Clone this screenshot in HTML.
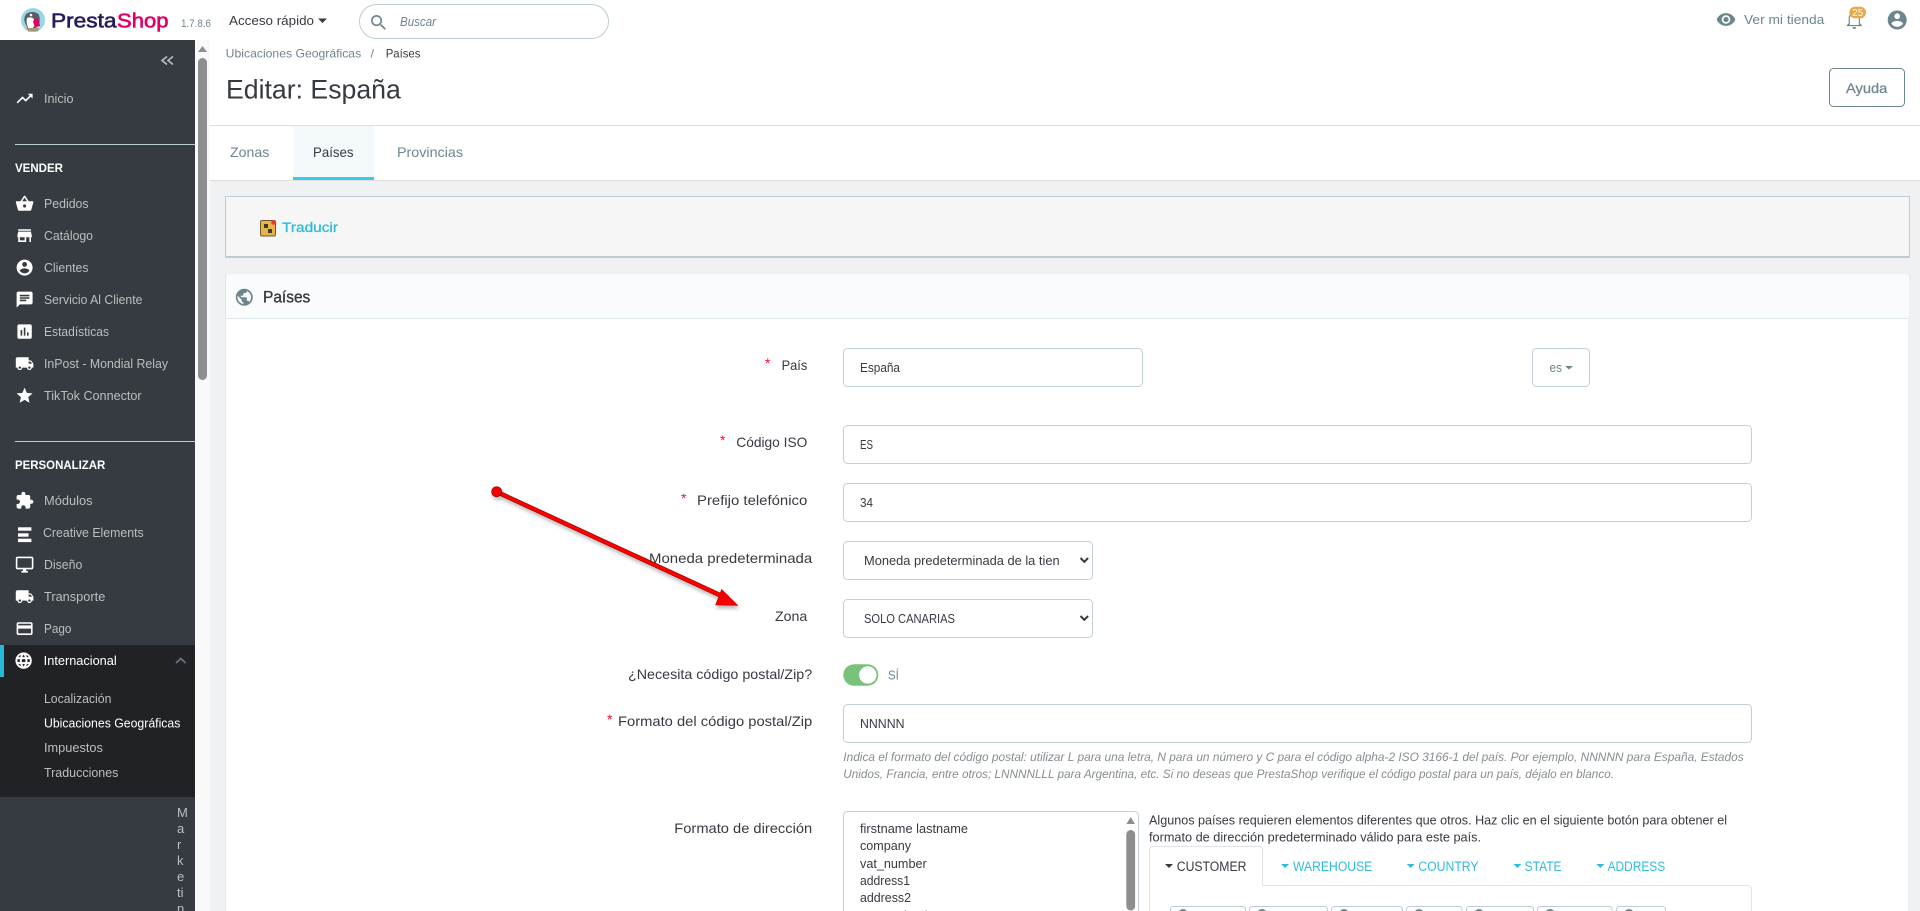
<!DOCTYPE html>
<html lang="es">
<head>
<meta charset="utf-8">
<title>Editar: España</title>
<style>
html,body{margin:0;padding:0;width:1920px;height:911px;overflow:hidden;background:#fff}
svg{display:block}
text{font-family:"Liberation Sans",sans-serif;white-space:pre}
.s{font-size:12.5px;fill:#bebebe}
.h{font-size:12px;font-weight:bold;fill:#fff}
.l{font-size:14px;fill:#363a41}
.i{font-size:12.5px;fill:#363a41}
.e{font-size:11.5px;font-style:italic;fill:#858d91}
.t{font-size:14px}
.c{font-size:13.5px;fill:#2fbcd9}
.b{fill:none;stroke:#c2d0d5}
.r{font-size:14px;fill:#ff0a2b}
</style>
</head>
<body>
<svg xmlns="http://www.w3.org/2000/svg" width="1920" height="911" viewBox="0 0 1920 911">
<defs>
<filter id="sh" x="-10%" y="-20%" width="120%" height="140%"><feDropShadow dx="1" dy="3" stdDeviation="1.8" flood-color="#666" flood-opacity=".45"/></filter>
<path id="truck" d="M20 8h-3V4H3c-1.100 0-2 .9-2 2v11h2c0 1.660 1.340 3 3 3s3-1.340 3-3h6c0 1.660 1.340 3 3 3s3-1.340 3-3h2v-5l-3-4zM6 18.500c-.83 0-1.500-.67-1.500-1.500s.67-1.500 1.500-1.500 1.500.67 1.500 1.500-.67 1.500-1.500 1.500zm13.500-9l1.960 2.500H17V9.500h2.500zm-1.500 9c-.83 0-1.500-.67-1.500-1.500s.67-1.500 1.500-1.500 1.500.67 1.500 1.500-.67 1.500-1.500 1.500z"/>
</defs>

<!-- page background -->
<rect width="1920" height="911" fill="#fff"/>
<rect x="210" y="181" width="1710" height="730" fill="#eff1f2"/>

<!-- top bar: logo -->
<circle cx="33" cy="20" r="12" fill="#9ad7e6"/>
<path d="M25.500 15c2-3.500 10.500-4.500 13.500 0 1 3 1 6 0 9l-4 5h-7l-3-6c-1-3-1-5 .5-8z" fill="#5a5f65"/>
<path d="M27 18c2-1 5-1 7 1l1 6-3 4h-3c-2-3-3-7-2-11z" fill="#fff"/>
<path d="M35 17l4 4 1 5-5 1-2-5z" fill="#df0067"/>
<path d="M26 28h13l-1 3.500H28z" fill="#a8977f"/>
<circle cx="31" cy="15" r="1.300" fill="#fff"/>
<text x="51" y="27.500" font-size="20.500" fill="#251b5b" stroke="#251b5b" stroke-width=".6" textLength="65.500" lengthAdjust="spacingAndGlyphs">Presta</text>
<text x="117" y="27.500" font-size="20.500" fill="#df0067" stroke="#df0067" stroke-width=".6" textLength="51.500" lengthAdjust="spacingAndGlyphs">Shop</text>
<text x="181" y="27" font-size="11" fill="#6c868e" textLength="30" lengthAdjust="spacingAndGlyphs">1.7.8.6</text>
<text x="229" y="25" font-size="13" fill="#363a41" textLength="85" lengthAdjust="spacingAndGlyphs">Acceso rápido</text>
<path d="M318 18.500h9l-4.500 4.500z" fill="#363a41"/>

<!-- search -->
<rect x="359.500" y="4.500" width="249" height="34" rx="17" fill="#fff" stroke="#bbcdd2"/>
<path transform="translate(368.500 12.500) scale(.85)" fill="#6c868e" d="M15.500 14h-.79l-.28-.27C15.410 12.590 16 11.110 16 9.500 16 5.910 13.090 3 9.500 3S3 5.910 3 9.500 5.910 16 9.500 16c1.610 0 3.090-.59 4.230-1.570l.27.28v.79l5 4.990L20.490 19l-4.990-5zm-6 0C7.010 14 5 11.990 5 9.500S7.010 5 9.500 5 14 7.010 14 9.500 11.990 14 9.500 14z"/>
<text x="400" y="26" font-size="12.500" font-style="italic" fill="#6c868e" textLength="36" lengthAdjust="spacingAndGlyphs">Buscar</text>

<!-- top bar: right -->
<path transform="translate(1715.800 9.300) scale(.85)" fill="#6c868e" d="M12 4.500C7 4.500 2.730 7.610 1 12c1.730 4.390 6 7.500 11 7.500s9.270-3.110 11-7.500c-1.730-4.390-6-7.500-11-7.500zM12 17c-2.760 0-5-2.240-5-5s2.240-5 5-5 5 2.240 5 5-2.240 5-5 5zm0-8c-1.660 0-3 1.340-3 3s1.340 3 3 3 3-1.340 3-3-1.340-3-3-3z"/>
<text x="1744" y="24" font-size="13" fill="#6c868e" textLength="80.300" lengthAdjust="spacingAndGlyphs">Ver mi tienda</text>
<path transform="translate(1843 8.300) scale(.94)" fill="#6c868e" d="M12 22c1.100 0 2-.9 2-2h-4c0 1.100.9 2 2 2zm6-6v-5c0-3.070-1.630-5.640-4.500-6.320V4c0-.83-.67-1.500-1.500-1.500s-1.500.67-1.500 1.500v.68C7.640 5.360 6 7.920 6 11v5l-2 2v1h16v-1l-2-2zm-1.200 1.800H7.200V11c0-2.480 2.310-4.800 4.800-4.800s4.800 2.320 4.800 4.800v6.800z"/>
<rect x="1849.300" y="6.700" width="16.700" height="11.600" rx="5.800" fill="#e8a94c"/>
<text x="1852.300" y="16" font-size="10" fill="#fff" textLength="10.800" lengthAdjust="spacingAndGlyphs">25</text>
<path transform="translate(1885.800 8.600) scale(.95)" fill="#6c868e" d="M12 2C6.480 2 2 6.480 2 12s4.480 10 10 10 10-4.480 10-10S17.520 2 12 2zm0 3c1.660 0 3 1.340 3 3s-1.340 3-3 3-3-1.340-3-3 1.340-3 3-3zm0 14.200c-2.500 0-4.710-1.280-6-3.220.03-1.990 4-3.080 6-3.080 1.990 0 5.970 1.090 6 3.080-1.290 1.940-3.500 3.220-6 3.220z"/>

<!-- sidebar -->
<rect x="0" y="40" width="195" height="871" fill="#363a41"/>
<rect x="195" y="40" width="15" height="871" fill="#f9f9f9"/>
<path d="M202.500 46l4.500 6h-9z" fill="#8e8e8e"/>
<rect x="198" y="58" width="9" height="322" rx="4.500" fill="#8e8e8e"/>
<path d="M167 56.500l-5 4 5 4M173 56.500l-5 4 5 4" fill="none" stroke="#bebebe" stroke-width="1.600"/>

<g fill="#fff">
<path transform="translate(15 89) scale(.8)" d="M16 6l2.290 2.290-4.880 4.880-4-4L2 16.590 3.410 18l6-6 4 4 6.300-6.290L22 12V6z"/>
<path transform="translate(15 194) scale(.8)" d="M17.210 9l-4.380-6.560c-.19-.28-.51-.42-.83-.42-.32 0-.64.14-.83.43L6.790 9H2c-.55 0-1 .45-1 1 0 .09.01.18.04.27l2.540 9.270c.23.84 1 1.460 1.920 1.460h13c.92 0 1.690-.62 1.930-1.460l2.540-9.270L23 10c0-.55-.45-1-1-1h-4.790zM9 9l3-4.400L15 9H9zm3 8c-1.100 0-2-.9-2-2s.9-2 2-2 2 .9 2 2-.9 2-2 2z"/>
<path transform="translate(15 226) scale(.8)" d="M20 4H4v2h16V4zm1 10v-2l-1-5H4l-1 5v2h1v6h10v-6h4v6h2v-6h1zm-9 4H6v-4h6v4z"/>
<path transform="translate(15 258) scale(.8)" d="M12 2C6.480 2 2 6.480 2 12s4.480 10 10 10 10-4.480 10-10S17.520 2 12 2zm0 3c1.660 0 3 1.340 3 3s-1.340 3-3 3-3-1.340-3-3 1.340-3 3-3zm0 14.200c-2.500 0-4.710-1.280-6-3.220.03-1.990 4-3.080 6-3.080 1.990 0 5.970 1.090 6 3.080-1.290 1.940-3.500 3.220-6 3.220z"/>
<path transform="translate(15 290) scale(.8)" d="M20 2H4c-1.100 0-1.990.9-1.990 2L2 22l4-4h14c1.100 0 2-.9 2-2V4c0-1.100-.9-2-2-2zM6 9h12v2H6V9zm8 5H6v-2h8v2zm4-6H6V6h12v2z"/>
<path transform="translate(15 322) scale(.8)" d="M19 3H5c-1.100 0-2 .9-2 2v14c0 1.100.9 2 2 2h14c1.100 0 2-.9 2-2V5c0-1.100-.9-2-2-2zM9 17H7v-7h2v7zm4 0h-2V7h2v10zm4 0h-2v-4h2v4z"/>
<use href="#truck" transform="translate(15 354) scale(.8)"/>
<path transform="translate(15 386) scale(.8)" d="M12 17.270L18.180 21l-1.640-7.030L22 9.240l-7.190-.61L12 2 9.190 8.630 2 9.240l5.460 4.730L5.820 21z"/>
<path transform="translate(15 491) scale(.8)" d="M20.500 11H19V7c0-1.100-.9-2-2-2h-4V3.500C13 2.120 11.880 1 10.500 1S8 2.120 8 3.500V5H4c-1.100 0-1.990.9-1.990 2v3.800H3.500c1.490 0 2.700 1.210 2.700 2.700s-1.210 2.700-2.700 2.700H2V20c0 1.100.9 2 2 2h3.800v-1.500c0-1.490 1.210-2.700 2.700-2.700 1.490 0 2.700 1.210 2.700 2.700V22H17c1.100 0 2-.9 2-2v-4h1.500c1.380 0 2.500-1.120 2.500-2.500S21.880 11 20.500 11z"/>
<rect x="18" y="527.300" width="13.400" height="3.400"/><rect x="18" y="533.300" width="10.600" height="3.400"/><rect x="18" y="538.700" width="13.400" height="3.400"/>
<path transform="translate(15 555) scale(.8)" d="M21 2H3c-1.100 0-2 .9-2 2v12c0 1.100.9 2 2 2h7v2H8v2h8v-2h-2v-2h7c1.100 0 2-.9 2-2V4c0-1.100-.9-2-2-2zm0 14H3V4h18v12z"/>
<use href="#truck" transform="translate(15 587) scale(.8)"/>
<path transform="translate(15 619) scale(.8)" d="M20 4H4c-1.110 0-1.990.89-1.990 2L2 18c0 1.110.89 2 2 2h16c1.110 0 2-.89 2-2V6c0-1.110-.89-2-2-2zm0 14H4v-6h16v6zm0-10H4V6h16v2z"/>
</g>

<text class="s" x="44" y="103" textLength="29.500" lengthAdjust="spacingAndGlyphs">Inicio</text>
<rect x="15" y="144" width="180" height="1" fill="#bbcdd2"/>
<text class="h" x="15" y="172" textLength="48" lengthAdjust="spacingAndGlyphs">VENDER</text>
<text class="s" x="44" y="208" textLength="44.600" lengthAdjust="spacingAndGlyphs">Pedidos</text>
<text class="s" x="44" y="240" textLength="49" lengthAdjust="spacingAndGlyphs">Catálogo</text>
<text class="s" x="44" y="272" textLength="44.600" lengthAdjust="spacingAndGlyphs">Clientes</text>
<text class="s" x="44" y="304" textLength="98.400" lengthAdjust="spacingAndGlyphs">Servicio Al Cliente</text>
<text class="s" x="44" y="336" textLength="65" lengthAdjust="spacingAndGlyphs">Estadísticas</text>
<text class="s" x="44" y="368" textLength="124" lengthAdjust="spacingAndGlyphs">InPost - Mondial Relay</text>
<text class="s" x="44" y="400" textLength="97.600" lengthAdjust="spacingAndGlyphs">TikTok Connector</text>
<rect x="15" y="441" width="180" height="1" fill="#bbcdd2"/>
<text class="h" x="15" y="469" textLength="90.300" lengthAdjust="spacingAndGlyphs">PERSONALIZAR</text>
<text class="s" x="44" y="505" textLength="48.600" lengthAdjust="spacingAndGlyphs">Módulos</text>
<text class="s" x="43" y="537" textLength="100.700" lengthAdjust="spacingAndGlyphs">Creative Elements</text>
<text class="s" x="44" y="569" textLength="38.400" lengthAdjust="spacingAndGlyphs">Diseño</text>
<text class="s" x="44" y="601" textLength="61.300" lengthAdjust="spacingAndGlyphs">Transporte</text>
<text class="s" x="44" y="633" textLength="27.400" lengthAdjust="spacingAndGlyphs">Pago</text>

<rect x="0" y="645" width="195" height="152" fill="#202226"/>
<rect x="0" y="645" width="4" height="32" fill="#25b9d7"/>
<path transform="translate(14 651) scale(.8)" fill="#fff" stroke="#fff" stroke-width=".5" d="M11.990 2C6.470 2 2 6.480 2 12s4.470 10 9.990 10C17.520 22 22 17.520 22 12S17.520 2 11.990 2zm6.930 6h-2.950c-.32-1.250-.78-2.450-1.380-3.560 1.840.63 3.370 1.910 4.330 3.560zM12 4.040c.83 1.200 1.480 2.530 1.910 3.960h-3.820c.43-1.430 1.080-2.760 1.910-3.960zM4.260 14C4.100 13.360 4 12.690 4 12s.1-1.360.26-2h3.380c-.08.66-.14 1.320-.14 2 0 .68.06 1.340.14 2H4.260zm.82 2h2.950c.32 1.250.78 2.450 1.380 3.560-1.840-.63-3.370-1.900-4.330-3.560zm2.950-8H5.080c.96-1.660 2.490-2.930 4.330-3.560C8.810 5.550 8.350 6.750 8.030 8zM12 19.960c-.83-1.200-1.480-2.530-1.910-3.960h3.820c-.43 1.430-1.080 2.760-1.910 3.960zM14.340 14H9.660c-.09-.66-.16-1.320-.16-2 0-.68.07-1.350.16-2h4.680c.09.65.16 1.320.16 2 0 .68-.07 1.340-.16 2zm.25 5.560c.6-1.110 1.060-2.310 1.380-3.560h2.950c-.96 1.650-2.490 2.930-4.330 3.560zM16.360 14c.08-.66.14-1.320.14-2 0-.68-.06-1.340-.14-2h3.380c.16.64.26 1.310.26 2s-.1 1.360-.26 2h-3.380z"/>
<text x="43.700" y="665" font-size="12.500" fill="#fff" textLength="73" lengthAdjust="spacingAndGlyphs">Internacional</text>
<path d="M176 663l4.800-4.500 4.800 4.500" fill="none" stroke="#6c7378" stroke-width="1.800"/>
<text class="s" x="44" y="703" textLength="67.400" lengthAdjust="spacingAndGlyphs">Localización</text>
<text x="44" y="727.500" font-size="12.500" fill="#fff" textLength="136.400" lengthAdjust="spacingAndGlyphs">Ubicaciones Geográficas</text>
<text class="s" x="44" y="752" textLength="58.900" lengthAdjust="spacingAndGlyphs">Impuestos</text>
<text class="s" x="44" y="777" textLength="74.400" lengthAdjust="spacingAndGlyphs">Traducciones</text>
<g font-size="13" fill="#bebebe">
<text x="177" y="817">M</text><text x="177" y="833">a</text><text x="177" y="849">r</text><text x="177" y="865">k</text><text x="177" y="881">e</text><text x="177" y="897">ti</text><text x="177" y="913">n</text>
</g>

<!-- page head -->
<text x="225.700" y="57.500" font-size="12" fill="#6c868e" textLength="135.500" lengthAdjust="spacingAndGlyphs">Ubicaciones Geográficas</text>
<text x="370.600" y="57.500" font-size="12" fill="#6c868e">/</text>
<text x="385.700" y="57.500" font-size="12" fill="#363a41" textLength="34.700" lengthAdjust="spacingAndGlyphs">Países</text>
<text x="226" y="98.500" font-size="27" fill="#363a41" textLength="174.800" lengthAdjust="spacingAndGlyphs">Editar: España</text>
<rect x="1829.500" y="68.500" width="75" height="38" rx="4" fill="#fff" stroke="#6c868e"/>
<text x="1846" y="93" font-size="14" fill="#6c868e" stroke="#6c868e" stroke-width=".25" textLength="41.300" lengthAdjust="spacingAndGlyphs">Ayuda</text>
<rect x="210" y="125" width="1710" height="1" fill="#dfdfdf"/>

<!-- tabs -->
<rect x="293" y="126" width="81" height="54" fill="#f4f9fb"/>
<rect x="293" y="177" width="81" height="3" fill="#39cbe6"/>
<rect x="210" y="180" width="1710" height="1" fill="#dfdfdf"/>
<text class="t" x="230" y="157" fill="#6c868e" textLength="39.400" lengthAdjust="spacingAndGlyphs">Zonas</text>
<text class="t" x="313" y="157" fill="#363a41" textLength="40.500" lengthAdjust="spacingAndGlyphs">Países</text>
<text class="t" x="397" y="157" fill="#6c868e" textLength="66" lengthAdjust="spacingAndGlyphs">Provincias</text>

<!-- translate box -->
<rect x="225.500" y="196.500" width="1684" height="60" fill="#f6f6f6" stroke="#bbcdd2"/>
<rect x="225" y="256" width="1685" height="2" fill="#bbcdd2"/>
<rect x="260.500" y="220.500" width="15" height="15.500" rx="1.500" fill="#e8b44a" stroke="#6b5a30"/>
<rect x="264" y="224" width="4" height="4" fill="#3d3a2c"/><rect x="268" y="229" width="4" height="4" fill="#3d3a2c"/>
<circle cx="273.500" cy="222.500" r="2.300" fill="#f0392a"/>
<text x="282" y="232" font-size="14" fill="#2fbcd9" stroke="#2fbcd9" stroke-width=".3" textLength="56" lengthAdjust="spacingAndGlyphs">Traducir</text>

<!-- card -->
<rect x="225.500" y="273.500" width="1683.500" height="650" rx="3" fill="#fff" stroke="#e1e6e8"/>
<path d="M226 318V276.500a3 3 0 0 1 3-3H1906a3 3 0 0 1 3 3V318z" fill="#fafbfc"/>
<rect x="226" y="318" width="1683" height="1" fill="#dde6e9"/>
<path transform="translate(234.100 287.100) scale(.85)" fill="#6c868e" d="M12 2C6.480 2 2 6.480 2 12s4.480 10 10 10 10-4.480 10-10S17.520 2 12 2zm-1 17.930c-3.950-.49-7-3.850-7-7.930 0-.62.08-1.210.21-1.790L9 15v1c0 1.100.9 2 2 2v1.930zm6.900-2.540c-.26-.81-1-1.390-1.900-1.390h-1v-3c0-.55-.45-1-1-1H8v-2h2c.55 0 1-.45 1-1V7h2c1.100 0 2-.9 2-2v-.41c2.930 1.190 5 4.060 5 7.410 0 2.080-.8 3.970-2.100 5.390z"/>
<text x="263" y="302.300" font-size="16.500" fill="#363a41" stroke="#363a41" stroke-width=".35" textLength="47.300" lengthAdjust="spacingAndGlyphs">Países</text>

<!-- form labels -->
<text class="r" x="765" y="368">*</text><text class="l" x="781.600" y="370" textLength="25.700" lengthAdjust="spacingAndGlyphs">País</text>
<text class="r" x="720" y="445">*</text><text class="l" x="736.300" y="447" textLength="71" lengthAdjust="spacingAndGlyphs">Código ISO</text>
<text class="r" x="681" y="503">*</text><text class="l" x="697" y="505" textLength="110.300" lengthAdjust="spacingAndGlyphs">Prefijo telefónico</text>
<text class="l" x="649" y="563" textLength="163.200" lengthAdjust="spacingAndGlyphs">Moneda predeterminada</text>
<text class="l" x="775" y="621" textLength="32.300" lengthAdjust="spacingAndGlyphs">Zona</text>
<text class="l" x="628" y="679" textLength="184.200" lengthAdjust="spacingAndGlyphs">¿Necesita código postal/Zip?</text>
<text class="r" x="607" y="724">*</text><text class="l" x="618" y="726" textLength="194.200" lengthAdjust="spacingAndGlyphs">Formato del código postal/Zip</text>
<text class="l" x="674.300" y="833" textLength="137.900" lengthAdjust="spacingAndGlyphs">Formato de dirección</text>

<!-- inputs -->
<rect class="b" x="843.500" y="348.500" width="299" height="38" rx="4"/>
<text class="i" x="860" y="372" textLength="40" lengthAdjust="spacingAndGlyphs">España</text>
<rect class="b" x="1532.500" y="348.500" width="57" height="38" rx="4"/>
<text x="1549.500" y="372" font-size="12.500" fill="#6c868e" textLength="12.500" lengthAdjust="spacingAndGlyphs">es</text>
<path d="M1565 366h8l-4 3.500z" fill="#6c868e"/>
<rect class="b" x="843.500" y="425.500" width="908" height="38" rx="4"/>
<text class="i" x="860" y="449" textLength="13" lengthAdjust="spacingAndGlyphs">ES</text>
<rect class="b" x="843.500" y="483.500" width="908" height="38" rx="4"/>
<text class="i" x="860" y="507" textLength="13" lengthAdjust="spacingAndGlyphs">34</text>
<rect class="b" x="843.500" y="541.500" width="249" height="38" rx="4"/>
<text class="i" x="864" y="565" textLength="195.600" lengthAdjust="spacingAndGlyphs">Moneda predeterminada de la tien</text>
<path d="M1080.500 558l3.800 3.800 3.800-3.800" fill="none" stroke="#363a41" stroke-width="2"/>
<rect class="b" x="843.500" y="599.500" width="249" height="38" rx="4"/>
<text class="i" x="864" y="623" textLength="91" lengthAdjust="spacingAndGlyphs">SOLO CANARIAS</text>
<path d="M1080.500 616l3.800 3.800 3.800-3.800" fill="none" stroke="#363a41" stroke-width="2"/>

<!-- toggle -->
<rect x="843.300" y="664.300" width="35" height="21.400" rx="10.700" fill="#78c27b"/>
<circle cx="867.800" cy="675" r="8.700" fill="#fff"/>
<text class="i" x="888" y="679.500" style="fill:#6c868e" textLength="10.800" lengthAdjust="spacingAndGlyphs">SÍ</text>

<!-- postcode -->
<rect class="b" x="843.500" y="704.500" width="908" height="38" rx="4"/>
<text class="i" x="860" y="728" textLength="44.500" lengthAdjust="spacingAndGlyphs">NNNNN</text>
<text class="e" x="843.300" y="761" textLength="900.400" lengthAdjust="spacingAndGlyphs">Indica el formato del código postal: utilizar L para una letra, N para un número y C para el código alpha-2 ISO 3166-1 del país. Por ejemplo, NNNNN para España, Estados</text>
<text class="e" x="843.300" y="778" textLength="770.700" lengthAdjust="spacingAndGlyphs">Unidos, Francia, entre otros; LNNNNLLL para Argentina, etc. Si no deseas que PrestaShop verifique el código postal para un país, déjalo en blanco.</text>

<!-- address textarea -->
<rect class="b" x="843.500" y="811.500" width="295" height="110" rx="4" style="fill:#fff"/>
<text class="i" x="860" y="833" textLength="108" lengthAdjust="spacingAndGlyphs">firstname lastname</text>
<text class="i" x="860" y="850" textLength="51" lengthAdjust="spacingAndGlyphs">company</text>
<text class="i" x="860" y="868" textLength="66.700" lengthAdjust="spacingAndGlyphs">vat_number</text>
<text class="i" x="860" y="885" textLength="50" lengthAdjust="spacingAndGlyphs">address1</text>
<text class="i" x="860" y="902" textLength="51" lengthAdjust="spacingAndGlyphs">address2</text>
<text class="i" x="860" y="920" textLength="78" lengthAdjust="spacingAndGlyphs">postcode city</text>
<path d="M1130.700 817l4.300 7h-8.600z" fill="#8e8e8e"/>
<rect x="1126.300" y="830" width="8.800" height="80.500" rx="4.400" fill="#8e8e8e"/>

<!-- address help -->
<text x="1149" y="824.500" font-size="12.500" fill="#363a41" textLength="578" lengthAdjust="spacingAndGlyphs">Algunos países requieren elementos diferentes que otros. Haz clic en el siguiente botón para obtener el</text>
<text x="1149" y="841.500" font-size="12.500" fill="#363a41" textLength="332" lengthAdjust="spacingAndGlyphs">formato de dirección predeterminado válido para este país.</text>

<!-- address tabs -->
<path d="M1149.500 911V849.500a3 3 0 0 1 3-3H1259.500a3 3 0 0 1 3 3V885.500H1747.500a4 4 0 0 1 4 4V911" fill="#fff" stroke="#dfe3e4"/>
<path d="M1165 864h8l-4 4z" fill="#363a41"/><text class="c" x="1176.800" y="871" style="fill:#363a41" textLength="69.600" lengthAdjust="spacingAndGlyphs">CUSTOMER</text>
<path d="M1281 864h8l-4 4z" fill="#2fbcd9"/><text class="c" x="1293" y="871" textLength="79.300" lengthAdjust="spacingAndGlyphs">WAREHOUSE</text>
<path d="M1406.700 864h8l-4 4z" fill="#2fbcd9"/><text class="c" x="1418.300" y="871" textLength="60.300" lengthAdjust="spacingAndGlyphs">COUNTRY</text>
<path d="M1513.400 864h8l-4 4z" fill="#2fbcd9"/><text class="c" x="1524.600" y="871" textLength="37" lengthAdjust="spacingAndGlyphs">STATE</text>
<path d="M1596.400 864h8l-4 4z" fill="#2fbcd9"/><text class="c" x="1607.600" y="871" textLength="57.600" lengthAdjust="spacingAndGlyphs">ADDRESS</text>

<!-- field buttons (cut by viewport) -->
<g fill="#fff" stroke="#bbcdd2">
<rect x="1170.500" y="906.500" width="75" height="20" rx="3"/>
<rect x="1249.500" y="906.500" width="78" height="20" rx="3"/>
<rect x="1331.500" y="906.500" width="71" height="20" rx="3"/>
<rect x="1406.500" y="906.500" width="55.500" height="20" rx="3"/>
<rect x="1466.500" y="906.500" width="67" height="20" rx="3"/>
<rect x="1537.500" y="906.500" width="74.500" height="20" rx="3"/>
<rect x="1616.500" y="906.500" width="49" height="20" rx="3"/>
</g>
<g fill="#6c868e">
<circle cx="1183" cy="914" r="5"/><circle cx="1262" cy="914" r="5"/><circle cx="1344" cy="914" r="5"/><circle cx="1419" cy="914" r="5"/><circle cx="1479" cy="914" r="5"/><circle cx="1550" cy="914" r="5"/><circle cx="1629" cy="914" r="5"/>
</g>

<!-- red annotation arrow -->
<g filter="url(#sh)">
<path d="M497 492L724 597" stroke="#a00000" stroke-width="4.600" fill="none"/>
<path d="M497 492L724 597" stroke="#ff0000" stroke-width="3.200" fill="none"/>
<path d="M721.600 589.300L738 605.500 715.500 605z" fill="#f40000" stroke="#b00000" stroke-width=".5"/>
<circle cx="496.700" cy="491.700" r="5" fill="#f80000" stroke="#8e0000" stroke-width=".7"/>
</g>
</svg>
</body>
</html>
